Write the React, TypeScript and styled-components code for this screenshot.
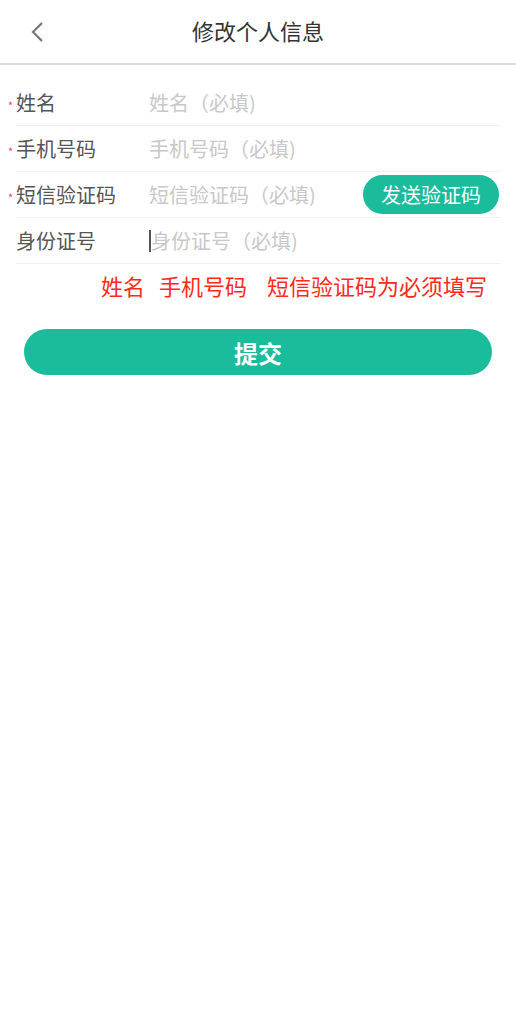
import styled, { createGlobalStyle } from "styled-components";

const GlobalStyle = createGlobalStyle`
  body {
    margin: 0;
    background: #fff;
    font-family: "Microsoft YaHei", "Noto Sans CJK SC", "Noto Sans", sans-serif;
  }
  * { box-sizing: border-box; }
`;

const Page = styled.div`
  width: 516px;
  min-height: 1019px;
  background: #fff;
`;

const Header = styled.div`
  position: relative;
  height: 65px;
  display: flex;
  align-items: center;
  justify-content: center;
  border-bottom: 2px solid #dcdcdc;
`;

const Back = styled.button`
  position: absolute;
  left: 22px;
  top: 14px;
  width: 30px;
  height: 36px;
  border: 0;
  background: none;
  padding: 0;
  display: flex;
  align-items: center;
  justify-content: center;
`;

const HeaderTitle = styled.h1`
  margin: 0 0 4px;
  font-size: 22px;
  font-weight: 400;
  color: #333;
`;

const Form = styled.div`
  padding: 15px 16px 0 16px;
`;

const Row = styled.div`
  position: relative;
  height: 46px;
  display: flex;
  align-items: center;
  border-bottom: 1px solid #f0f0f0;
`;

const Star = styled.span`
  position: absolute;
  left: -8px;
  top: 17px;
  color: #f2416b;
  font-size: 11px;
`;

const Label = styled.label`
  width: 133px;
  flex-shrink: 0;
  font-size: 20px;
  color: #555;
`;

const Input = styled.input<{ $caret?: boolean }>`
  flex: 1;
  min-width: 0;
  border: 0;
  outline: none;
  padding: 0;
  font-family: inherit;
  font-size: 20px;
  color: #333;
  background: transparent;
  border-left: ${(p) => (p.$caret ? "2px solid #555" : "0")};
  line-height: 22px;
  &::placeholder {
    color: #c8c8c8;
  }
`;

const SendButton = styled.button`
  flex-shrink: 0;
  width: 136px;
  height: 39px;
  margin-right: 1px;
  border: 0;
  border-radius: 20px;
  background: #1abc9c;
  color: #fff;
  font-family: inherit;
  font-size: 20px;
`;

const Error = styled.div`
  margin: 5px 29px 0 0;
  display: flex;
  justify-content: flex-end;
  font-size: 22px;
  color: #ff2a1a;
`;

const ErrorPart = styled.span<{ $gap: number }>`
  margin-left: ${(p) => p.$gap}px;
`;

const Submit = styled.button`
  display: block;
  width: 468px;
  height: 46px;
  margin: 28px 0 0 24px;
  border: 0;
  border-radius: 23px;
  background: #1abc9c;
  color: #fff;
  font-family: inherit;
  font-size: 24px;
  font-weight: 700;
`;

const fields = [
  { label: "姓名", required: true },
  { label: "手机号码", required: true },
  { label: "短信验证码", required: true, send: true },
  { label: "身份证号", required: false, caret: true },
];

export default function App() {
  return (
    <Page>
      <GlobalStyle />
      <Header>
        <Back aria-label="返回">
          <svg width="16" height="22" viewBox="0 0 16 22">
            <path d="M13 2 L4 11 L13 20" fill="none" stroke="#777" strokeWidth="2.2" />
          </svg>
        </Back>
        <HeaderTitle>修改个人信息</HeaderTitle>
      </Header>
      <Form>
        {fields.map((f) => (
          <Row key={f.label}>
            {f.required && <Star>*</Star>}
            <Label>{f.label}</Label>
            <Input $caret={f.caret} placeholder={`${f.label}（必填)`} />
            {f.send && <SendButton>发送验证码</SendButton>}
          </Row>
        ))}
      </Form>
      <Error>
        <ErrorPart $gap={0}>姓名</ErrorPart>
        <ErrorPart $gap={14}>手机号码</ErrorPart>
        <ErrorPart $gap={20}>短信验证码为必须填写</ErrorPart>
      </Error>
      <Submit>提交</Submit>
    </Page>
  );
}
